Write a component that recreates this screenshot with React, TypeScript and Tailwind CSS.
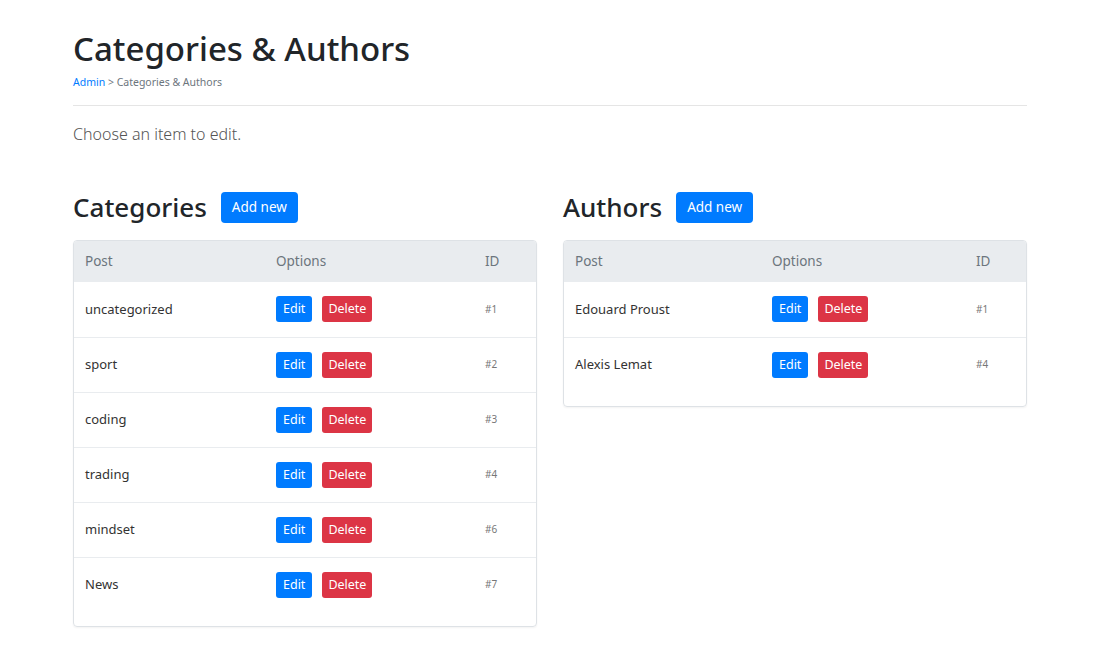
import React from "react";

const font = { fontFamily: '"Noto Sans", "Open Sans", sans-serif' };

type Row = { name: string; id: number };

const categories: Row[] = [
  { name: "uncategorized", id: 1 },
  { name: "sport", id: 2 },
  { name: "coding", id: 3 },
  { name: "trading", id: 4 },
  { name: "mindset", id: 6 },
  { name: "News", id: 7 },
];

const authors: Row[] = [
  { name: "Edouard Proust", id: 1 },
  { name: "Alexis Lemat", id: 4 },
];

function Table({ rows, cols }: { rows: Row[]; cols: string }) {
  return (
    <div className="border border-[#dee2e6] rounded-[4px] overflow-hidden pb-[14px] shadow-[0_1px_2px_rgba(0,0,0,0.05)]">
      <div className={`grid ${cols} bg-[#e9ecef] h-[41px] items-center px-[11px] text-[13.5px] text-[#6c757d]`}>
        <div>Post</div>
        <div>Options</div>
        <div>ID</div>
      </div>
      {rows.map((r, i) => (
        <div
          key={r.name}
          className={`grid ${cols} h-[55px] items-center px-[11px] ${i > 0 ? "border-t border-[#e9ecef]" : ""}`}
        >
          <div className="text-[13px] text-[#333]">{r.name}</div>
          <div className="flex gap-[10px]">
            <button className="h-[26px] px-[7px] rounded-[3px] bg-[#007bff] text-white text-[12.5px] leading-none">
              Edit
            </button>
            <button className="h-[26px] px-[6px] rounded-[3px] bg-[#dc3545] text-white text-[12.5px] leading-none">
              Delete
            </button>
          </div>
          <div className="text-[10px] text-[#777]">#{r.id}</div>
        </div>
      ))}
    </div>
  );
}

function Heading({ title }: { title: string }) {
  return (
    <div className="flex items-center gap-[14px] mb-[17px]">
      <h2 className="text-[26px] font-medium text-[#212529] leading-[31px]">{title}</h2>
      <button className="h-[31px] px-[11px] rounded-[4px] bg-[#007bff] text-white text-[13.5px]">Add new</button>
    </div>
  );
}

export default function App() {
  return (
    <div className="bg-white min-h-[659px] w-full" style={font}>
      <div className="w-[954px] ml-[73px] pt-[27px]">
        <h1 className="text-[33px] leading-[44px] font-medium text-[#212529]">Categories &amp; Authors</h1>
        <div className="text-[10.5px] text-[#6c757d] mt-[4px]">
          <span className="text-[#007bff]">Admin</span> &gt; Categories &amp; Authors
        </div>
        <div className="border-t border-[#e5e5e5] mt-[14px]" />
        <p className="text-[16px] font-light text-[#555] mt-[16px]">Choose an item to edit.</p>
        <div className="grid grid-cols-2 gap-[26px] mt-[46px]">
          <div>
            <Heading title="Categories" />
            <Table rows={categories} cols="grid-cols-[191px_209px_1fr]" />
          </div>
          <div>
            <Heading title="Authors" />
            <Table rows={authors} cols="grid-cols-[197px_204px_1fr]" />
          </div>
        </div>
      </div>
    </div>
  );
}
